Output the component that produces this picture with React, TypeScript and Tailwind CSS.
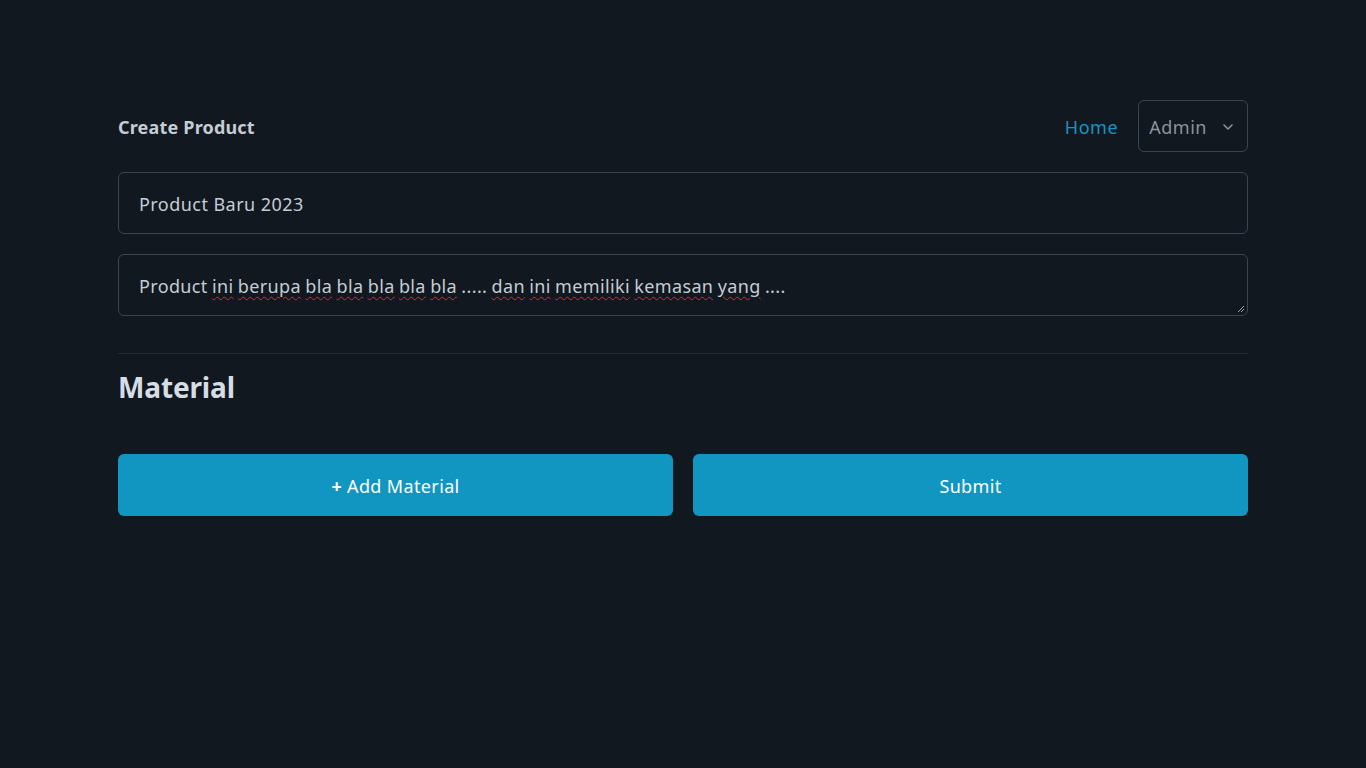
import React, { useState } from 'react';

const words: { text: string; typo?: boolean }[] = [
  { text: 'Product' },
  { text: 'ini', typo: true },
  { text: 'berupa', typo: true },
  { text: 'bla', typo: true },
  { text: 'bla', typo: true },
  { text: 'bla', typo: true },
  { text: 'bla', typo: true },
  { text: 'bla', typo: true },
  { text: '.....' },
  { text: 'dan', typo: true },
  { text: 'ini', typo: true },
  { text: 'memiliki', typo: true },
  { text: 'kemasan', typo: true },
  { text: 'yang', typo: true },
  { text: '....' },
];

const App: React.FC = () => {
  const [name, setName] = useState('Product Baru 2023');

  return (
    <div className="min-h-screen bg-[#111820] font-['Noto_Sans',sans-serif] text-[#c9d1d9]">
      <div className="mx-[118px] pt-[100px]">
        <div className="flex items-center justify-between">
          <h1 className="pt-[1px] text-lg font-bold tracking-[0.01em] text-[#c5ccd4]">Create Product</h1>
          <div className="flex items-center gap-5">
            <a href="#" className="pt-[1px] text-lg tracking-[0.03em] text-[#1396c4]">Home</a>
            <button className="flex h-[52px] items-center gap-[14px] rounded-md border border-[#3a4553] pl-[10px] pr-[12px] pt-[1px] text-lg tracking-[0.03em] text-[#8b939c]">
              Admin
              <svg className="h-[14px] w-[14px]" viewBox="0 0 14 14" fill="none" stroke="currentColor" strokeWidth={1.6} strokeLinecap="round" strokeLinejoin="round">
                <path d="M3 5l4 4 4-4" />
              </svg>
            </button>
          </div>
        </div>

        <form className="mt-5 flex flex-col gap-5">
          <input
            value={name}
            onChange={(e) => setName(e.target.value)}
            className="h-[62px] rounded-md border border-[#3a4553] bg-transparent px-5 pt-[1px] text-lg tracking-[0.025em] text-[#c5ccd4] outline-none"
          />
          <div className="relative flex h-[62px] items-center rounded-md border border-[#3a4553] px-5 text-lg tracking-[0.02em] text-[#c5ccd4]">
            <p className="flex gap-[0.24em] whitespace-nowrap pt-[1px]">
              {words.map((w, i) => (
                <span
                  key={i}
                  className={w.typo ? 'underline decoration-wavy decoration-[#e0282e] decoration-1 underline-offset-[3px]' : ''}
                >
                  {w.text}
                </span>
              ))}
            </p>
            <svg className="absolute bottom-[2px] right-[2px] h-[8px] w-[8px]" viewBox="0 0 8 8" stroke="#9aa2ab" strokeWidth={1}>
              <path d="M1 7L7 1M4 7L7 4" />
            </svg>
          </div>
        </form>

        <hr className="mt-[37px] border-[#242c36]" />
        <h2 className="mt-[12px] text-[28px] font-bold tracking-[-0.005em] text-[#d6dde4]">Material</h2>

        <div className="mt-[46px] grid grid-cols-2 gap-5">
          <button className="h-[62px] rounded-md bg-[#1196c2] pt-[1px] text-lg tracking-[0.02em] text-white">
            <span className="font-bold">+</span> Add Material
          </button>
          <button className="h-[62px] rounded-md bg-[#1196c2] pt-[1px] text-lg tracking-[0.02em] text-white">Submit</button>
        </div>
      </div>
    </div>
  );
};

export default App;
